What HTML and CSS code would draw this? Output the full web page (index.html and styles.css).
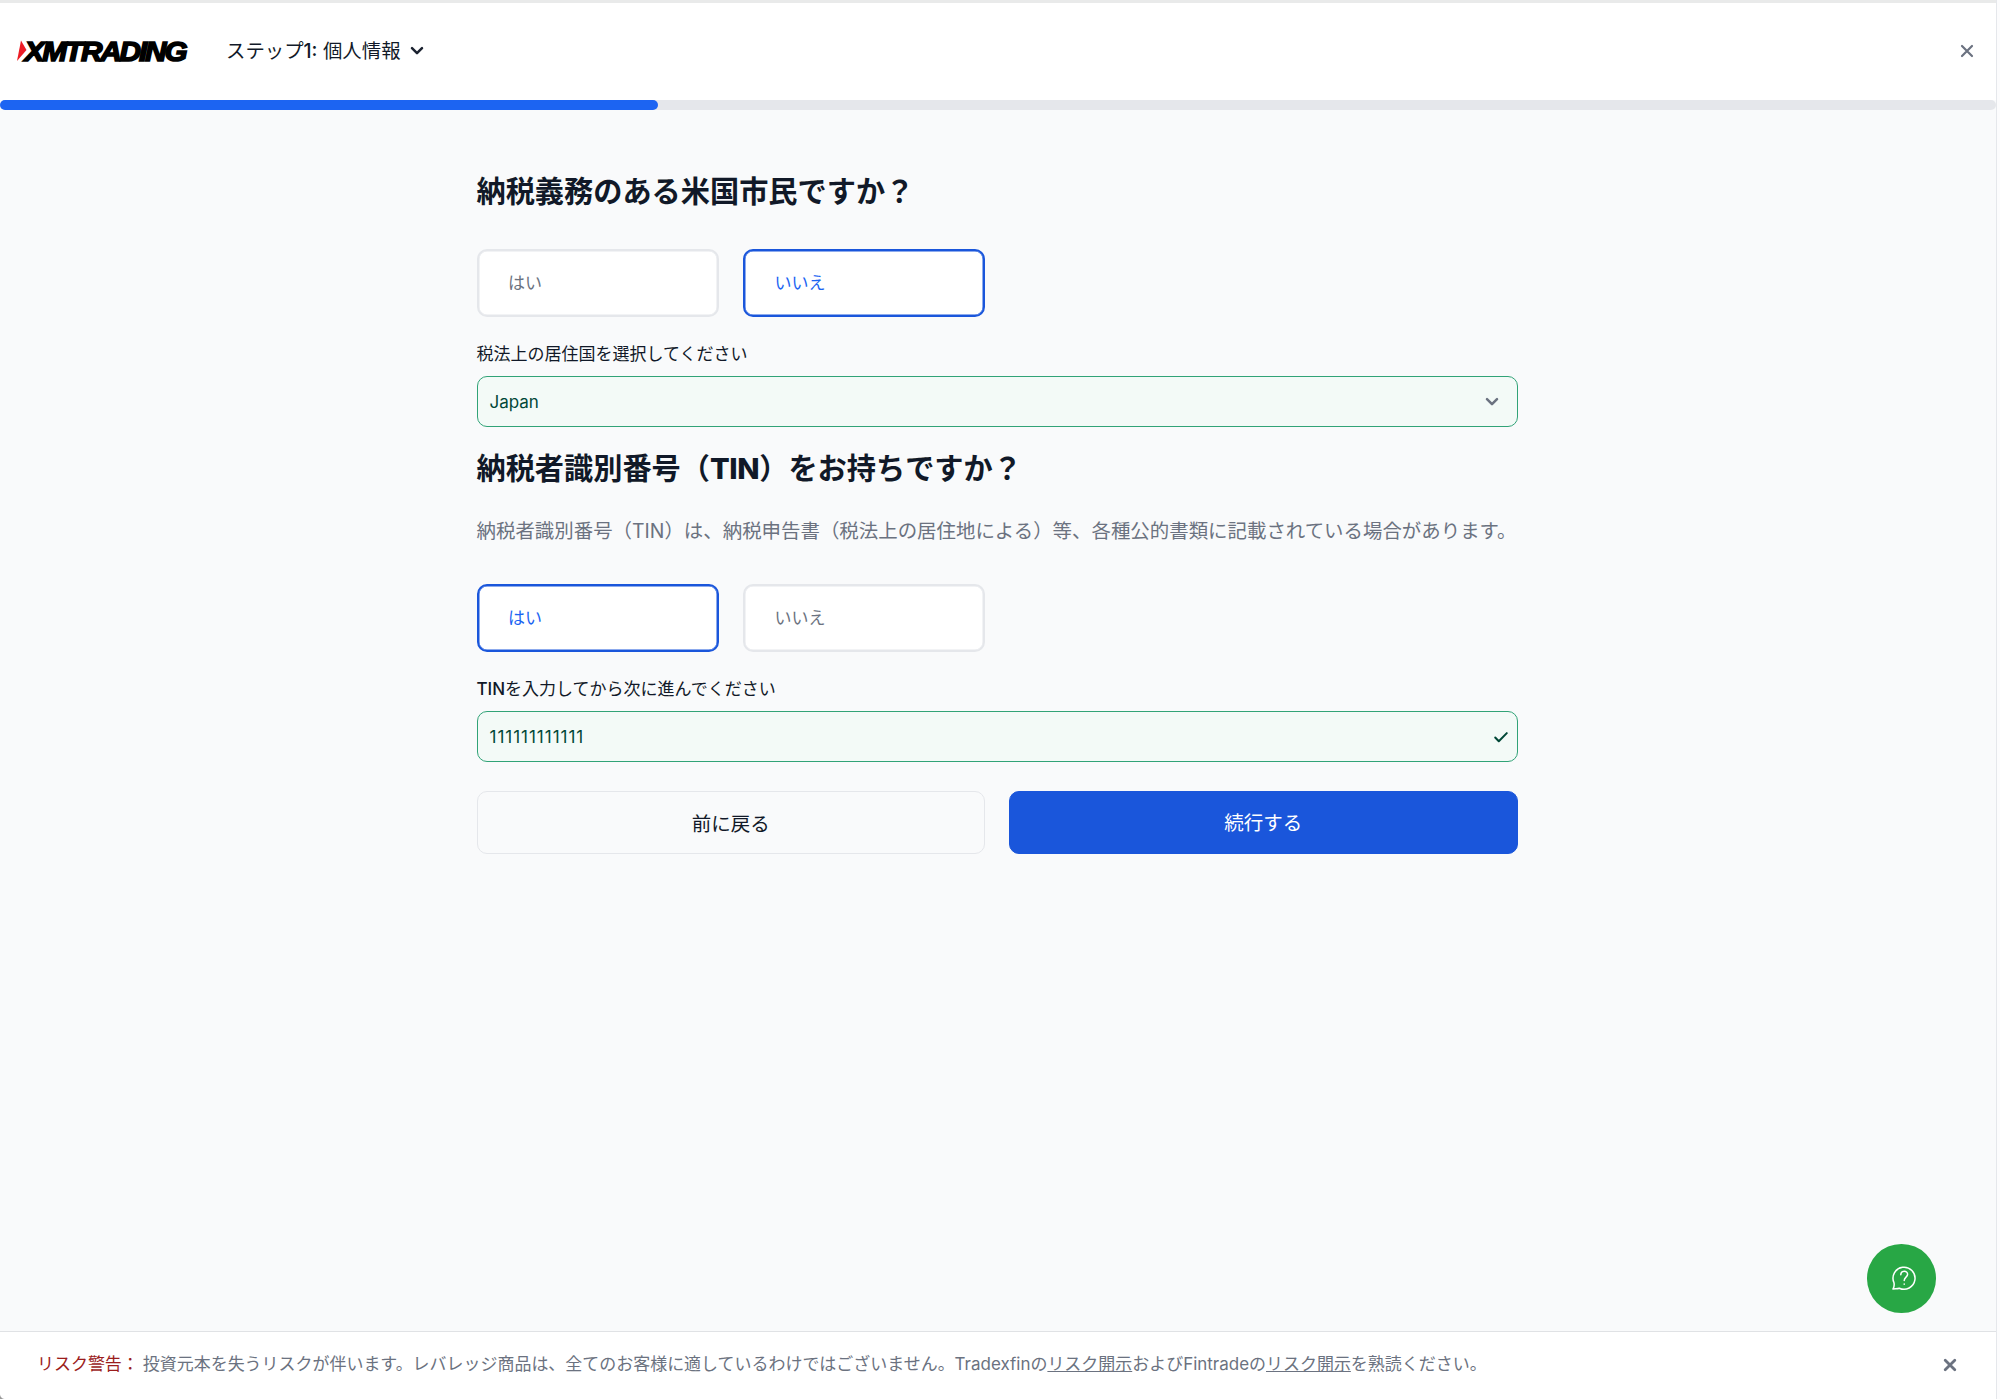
FILE: index.html
```html
<!DOCTYPE html>
<html lang="ja">
<head>
<meta charset="utf-8">
<title>XMTrading</title>
<link rel="stylesheet" href="styles.css">
</head>
<body>
<div class="page">
  <header class="header">
    <svg class="logo" width="180" height="44" viewBox="0 -8 180 44" role="img" aria-label="XMTrading">
      <path d="M4 3.5 9.500 13 0 24z" fill="#ed1c24"/>
      <text class="logo-text" transform="translate(7.500 23.500) scale(1.08 1)" textLength="151">XMTRADING</text>
    </svg>
    <button class="step" type="button"><span class="step-text">ステップ<b>1:</b> 個人情報</span>
      <svg width="14" height="10" viewBox="0 0 14 10" fill="none" stroke="#1b2230" stroke-width="2.5" stroke-linecap="round" stroke-linejoin="round"><path d="M2 2.2 7 7.2l5-5"/></svg>
    </button>
    <button class="close" type="button" aria-label="閉じる"><svg width="14" height="14" viewBox="0 0 14 14" fill="none" stroke="#6b7280" stroke-width="2.2" stroke-linecap="round"><path d="m2 2 10 10M12 2 2 12"/></svg></button>
  </header>
  <div class="progress"><div class="progress-fill"></div></div>
  <main class="form">
    <h1 class="title">納税義務のある米国市民ですか？</h1>
    <div class="choices">
      <div class="choice">はい</div>
      <div class="choice selected">いいえ</div>
    </div>
    <div class="label">税法上の居住国を選択してください</div>
    <div class="field field-select"><span>Japan</span>
      <svg width="14" height="10" viewBox="0 0 14 10" fill="none" stroke="#6b7280" stroke-width="2.5" stroke-linecap="round" stroke-linejoin="round"><path d="M2 2.2 7 7.2l5-5"/></svg>
    </div>
    <h2 class="title title-tin">納税者識別番号（<b>TIN</b>）をお持ちですか？</h2>
    <p class="hint">納税者識別番号（TIN）は、納税申告書（税法上の居住地による）等、各種公的書類に記載されている場合があります。</p>
    <div class="choices">
      <div class="choice selected">はい</div>
      <div class="choice">いいえ</div>
    </div>
    <div class="label"><b>TIN</b>を入力してから次に進んでください</div>
    <div class="field"><span class="digits">111111111111</span>
      <svg width="16" height="12" viewBox="0 0 16 12" fill="none" stroke="#014737" stroke-width="2" stroke-linecap="round" stroke-linejoin="round"><path d="m2.2 6.5 3.6 3.8 8-8.2"/></svg>
    </div>
    <div class="actions">
      <button class="btn" type="button">前に戻る</button>
      <button class="btn btn-primary" type="button">続行する</button>
    </div>
  </main>
  <footer class="risk">
    <p class="risk-text"><span class="risk-label">リスク警告：</span><span>投資元本を失うリスクが伴います。レバレッジ商品は、全てのお客様に適しているわけではございません。Tradexfinの<a>リスク開示</a>およびFintradeの<a>リスク開示</a>を熟読ください。</span></p>
    <button class="close" type="button" aria-label="閉じる"><svg width="14" height="14" viewBox="0 0 14 14" fill="none" stroke="#6b7280" stroke-width="2.8" stroke-linecap="round"><path d="m2.2 2.2 9.6 9.6M11.8 2.2l-9.6 9.6"/></svg></button>
  </footer>
</div>
<button class="chat" type="button" aria-label="ヘルプ">
  <svg width="26" height="26" viewBox="0 0 26 26" fill="none" stroke="#fff" stroke-width="1.5" stroke-linecap="round" stroke-linejoin="round"><path d="M2 24c1.1-1.9 1.4-4 1-6.200A11 11 0 1 1 8.300 23.200C6.200 24 4 23.500 2 24z"/><path d="M9.800 9.800c0-4.900 6.800-4.600 6.800-.5 0 2.900-3.400 2.700-3.400 6.200M13.200 18.900v.3"/></svg>
</button>
<div class="corner"></div>
</body>
</html>
```
FILE: styles.css
```css
* { box-sizing: border-box; }
body {
  margin: 0;
  background: #fcfcfd;
  font-family: Inter, "Noto Sans CJK JP", sans-serif;
  font-size: 17px;
  color: #111928;
  overflow: hidden;
}
button { margin: 0; padding: 0; border: 0; background: none; font: inherit; color: inherit; }
svg { display: block; flex: none; }
h1, h2, p { margin: 0; }
b { font-weight: 500; }
.page {
  width: 1997px;
  height: 1399px;
  display: flex;
  flex-direction: column;
  background: #f9fafb;
  border-right: 1px solid #e5e7eb;
}
.header {
  height: 100px;
  flex: none;
  display: flex;
  align-items: center;
  padding: 0 22px 2px 17px;
  border-top: 3px solid #e9eaea;
  background: #fff;
}
.logo { margin-right: 29px; }
.logo-text {
  font-family: "Liberation Sans", Arial, sans-serif;
  font-size: 27.5px;
  font-weight: 700;
  font-style: italic;
  fill: #000;
  stroke: #000;
  stroke-width: 1.6px;
}
.step {
  display: flex;
  align-items: center;
  gap: 9px;
  font-size: 19.4px;
  white-space: nowrap;
}
.step-text { margin-top: -2px; }
.close { margin-left: auto; }
.progress {
  height: 10px;
  flex: none;
  border-radius: 5px;
  background: #e5e7eb;
}
.progress-fill { width: 32.95%; height: 10px; border-radius: 5px; background: #1c64f2; }
.form { width: 1041px; margin: 0 auto 0 476.500px; flex: 1; }
.title {
  padding-top: 62px;
  font-size: 29.2px;
  line-height: 39px;
  font-weight: 700;
  white-space: nowrap;
}
.title b { font-weight: 800; letter-spacing: -0.4px; }
.title-tin { padding-top: 22px; }
.choices { display: grid; grid-template-columns: 242px 242px; gap: 24.500px; margin-top: 38px; }
.choice {
  height: 68px;
  padding: 0 0 3px 29.500px;
  display: flex;
  align-items: center;
  border: 2px solid #e5e7eb;
  border-radius: 10px;
  background: #fff;
  box-shadow: inset 0 0 0 0.5px #e5e7eb;
  color: #6b7280;
}
.selected { border-color: #1a56db; box-shadow: inset 0 0 0 0.5px #1a56db; color: #1c64f2; }
.label { margin-top: 25px; line-height: 25px; }
.field {
  height: 51px;
  margin-top: 9px;
  padding: 0 8px 0 12px;
  display: flex;
  align-items: center;
  justify-content: space-between;
  border: 1px solid #31a377;
  border-radius: 10px;
  background: #f3faf7;
  color: #014737;
}
.field-select { padding-right: 18px; }
.digits { letter-spacing: 0.98px; }
.hint { margin-top: 29px; font-size: 19.45px; line-height: 29px; color: #6b7280; white-space: nowrap; }
.hint + .choices { margin-top: 38px; }
.actions { display: grid; grid-template-columns: 1fr 1fr; gap: 24px; margin-top: 29px; }
.btn {
  height: 63px;
  border: 1px solid #e5e7eb;
  border-radius: 10px;
  font-size: 19.5px;
}
.btn-primary { padding-bottom: 2px; border-color: #1a56db; background: #1a56db; color: #fff; }
.risk {
  height: 68px;
  flex: none;
  display: flex;
  align-items: center;
  padding: 0 39px 2px 37px;
  border-top: 1px solid #e0e2e5;
  background: #fff;
  color: #6b7280;
}
.risk-text { display: flex; gap: 4px; margin-top: -4px; font-size: 16.98px; white-space: nowrap; }
.risk-label { color: #9b1c1c; }
.risk a { text-decoration: underline; }
.chat {
  position: absolute;
  left: 1867px;
  top: 1244px;
  width: 68.500px;
  height: 68.500px;
  display: flex;
  align-items: center;
  justify-content: center;
  padding-left: 5px;
  border-radius: 50%;
  background: #28a745;
}
.corner {
  position: absolute;
  left: 0;
  bottom: 0;
  width: 5px;
  height: 5px;
  background: radial-gradient(circle at 100% 0, transparent 4.500px, #999 5.500px);
}
```
